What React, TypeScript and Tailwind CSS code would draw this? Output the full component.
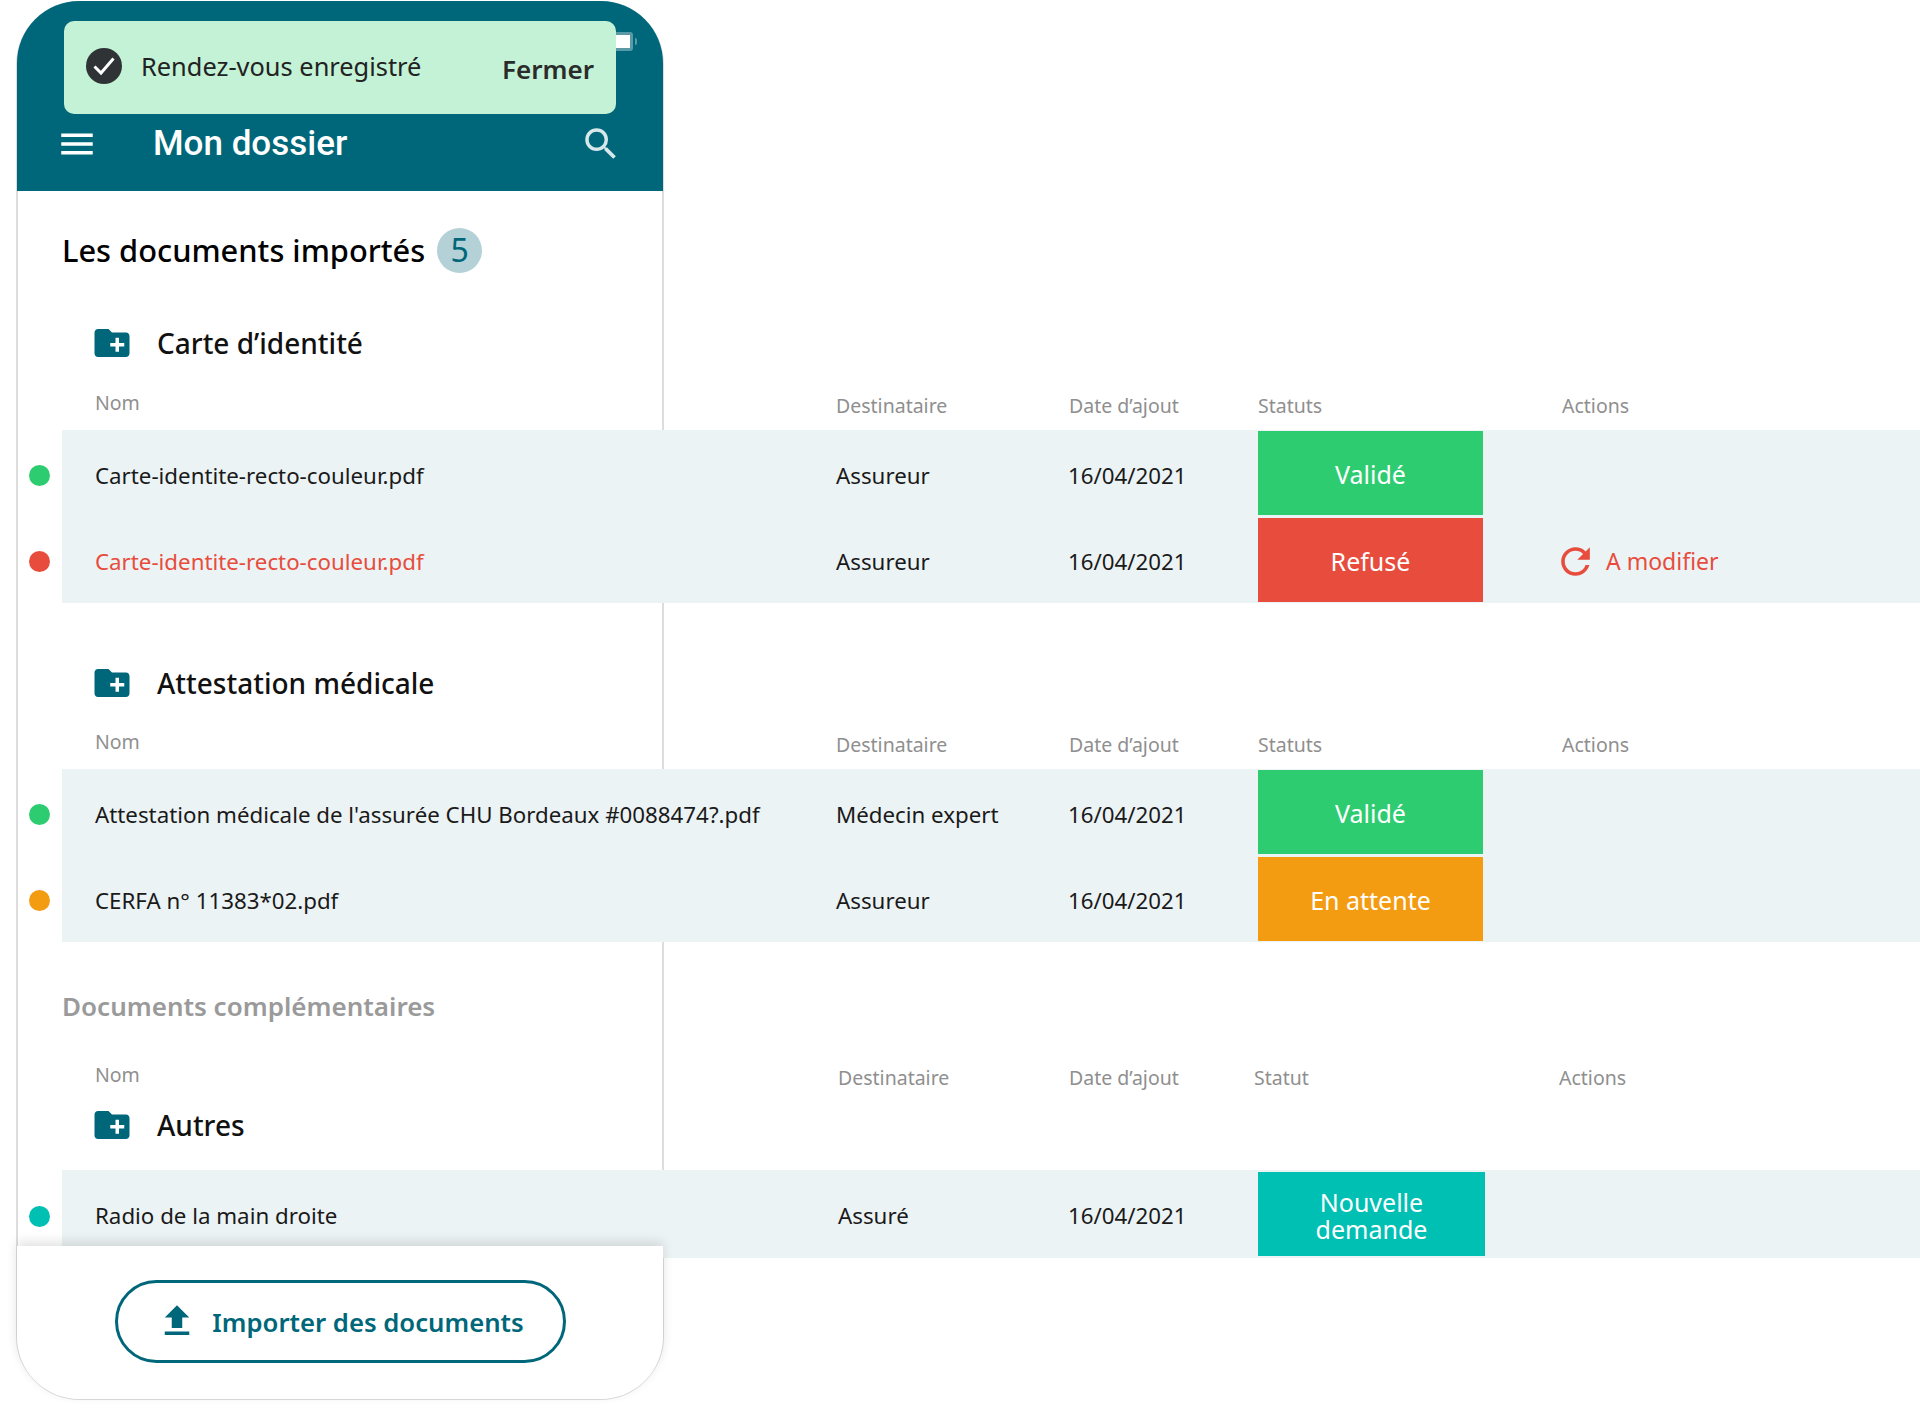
import { MdCreateNewFolder, MdFileUpload, MdMenu, MdRefresh, MdSearch } from 'react-icons/md';

type Row = {
  name: string;
  to: string;
  dot: string;
  status: string;
  statusBg: string;
  red?: boolean;
  action?: boolean;
  shifted?: boolean;
};

const identite: Row[] = [
  { name: 'Carte-identite-recto-couleur.pdf', to: 'Assureur', dot: 'bg-[#2ecc71]', status: 'Validé', statusBg: 'bg-[#2ecc71]' },
  { name: 'Carte-identite-recto-couleur.pdf', to: 'Assureur', dot: 'bg-[#e74c3c]', status: 'Refusé', statusBg: 'bg-[#e74c3c]', red: true, action: true }
];

const attestation: Row[] = [
  { name: "Attestation médicale de l'assurée CHU Bordeaux #0088474?.pdf", to: 'Médecin expert', dot: 'bg-[#2ecc71]', status: 'Validé', statusBg: 'bg-[#2ecc71]' },
  { name: 'CERFA n° 11383*02.pdf', to: 'Assureur', dot: 'bg-[#f39c12]', status: 'En attente', statusBg: 'bg-[#f39c12]' }
];

function FolderTitle({ title }: { title: string }) {
  return (
    <div className="flex items-center h-[40px] pl-[91px]">
      <MdCreateNewFolder className="w-[42px] h-[42px] text-[#00677a] shrink-0" />
      <span className="ml-[24px] text-[28px] font-medium text-[#111]">{title}</span>
    </div>
  );
}

function ColumnHeads({ statut = 'Statuts', shifted = false }: { statut?: string; shifted?: boolean }) {
  return (
    <div className="flex h-[30px] text-[19.5px] text-[#8f8f8f]">
      <span className={`pl-[95px] ${shifted ? 'w-[838px]' : 'w-[836px]'}`}>Nom</span>
      <span className={`pt-[3px] ${shifted ? 'w-[231px]' : 'w-[233px]'}`}>Destinataire</span>
      <span className={`pt-[3px] ${shifted ? 'w-[185px]' : 'w-[189px]'}`}>Date d’ajout</span>
      <span className={`pt-[3px] ${shifted ? 'w-[305px]' : 'w-[304px]'}`}>{statut}</span>
      <span className="pt-[3px]">Actions</span>
    </div>
  );
}

function DocRow({ row }: { row: Row }) {
  return (
    <div className={`flex items-center ${row.shifted ? 'h-[88px]' : 'h-[86.5px]'}`}>
      <div className="w-[62px] flex pl-[29px] pt-[4px]">
        <span className={`w-[21px] h-[21px] rounded-full ${row.dot}`} />
      </div>
      <div className="flex-1 h-full flex items-center bg-[#ecf3f5] text-[22.3px] text-[#1a1a1a]">
        <span className={`pl-[33px] pt-[4px] ${row.shifted ? 'w-[776px]' : 'w-[774px]'} ${row.red ? 'text-[#e74c3c]' : ''}`}>{row.name}</span>
        <span className={`pt-[4px] ${row.shifted ? 'w-[230px]' : 'w-[232px]'}`}>{row.to}</span>
        <span className="w-[190px] pt-[4px]">16/04/2021</span>
        <div className={`h-[84px] pt-[3px] flex items-center justify-center text-white text-[25px] ${row.shifted ? 'w-[227px]' : 'w-[225px]'} ${row.statusBg}`}>
          {row.status}
        </div>
        {row.action && (
          <div className="ml-[71px] pt-[3px] flex items-center text-[#e74c3c]">
            <MdRefresh className="w-[43px] h-[43px]" />
            <span className="ml-[9px] text-[23px]">A modifier</span>
          </div>
        )}
      </div>
    </div>
  );
}

export default function App() {
  return (
    <div className="relative w-full h-[1411px] bg-white overflow-hidden font-['Noto_Sans',sans-serif]">
      {/* phone outline sits behind the table bands */}
      <div className="absolute left-[16px] top-[1px] w-[648px] h-[1399px] rounded-[64px] border-2 border-[#dddddd]" />

      <header className="relative ml-[17px] w-[646px] h-[190px] mt-[1px] bg-[#00677a] rounded-t-[62px]">
        <div className="absolute right-[30px] top-[31px] w-[26px] h-[19px] rounded-[3px] border-[3px] border-[#5a9aa6] bg-white" />
        <div className="absolute right-[26px] top-[37px] w-[2px] h-[7px] rounded-r-[2px] bg-[#5a9aa6]" />
        <div className="absolute left-[47px] top-[20px] w-[552px] h-[93px] rounded-[10px] bg-[#c4f2d6] flex items-center pl-[22px] pr-[22px]">
          <svg viewBox="0 0 36 36" className="w-[36px] h-[36px] shrink-0 mb-[4px]">
            <circle cx="18" cy="18" r="18" fill="#2f3336" />
            <path d="M8.5 18.5l6.5 6.5L27.5 10.5" fill="none" stroke="#fff" strokeWidth="3" />
          </svg>
          <span className="ml-[19px] text-[25.4px] text-[#222] mb-[3px]">Rendez-vous enregistré</span>
          <span className="ml-auto mt-[4px] text-[26px] font-semibold text-[#2b2b2b]">Fermer</span>
        </div>
        <div className="absolute left-[39px] right-[41px] top-[117px] flex items-center text-white">
          <MdMenu className="w-[42px] h-[42px]" />
          <span className="ml-[55px] font-['Roboto',sans-serif] font-medium text-[35px]">Mon dossier</span>
          <MdSearch className="ml-auto w-[42px] h-[42px] text-[#d7e8eb]" />
        </div>
      </header>

      <main className="relative">
        <div className="flex items-center h-[46px] mt-[36px] pl-[62px]">
          <h1 className="text-[30.8px] font-medium text-black">Les documents importés</h1>
          <span className="ml-[12px] w-[45px] h-[45px] rounded-full bg-[#b3d1d7] text-[#00677a] text-[32px] flex items-center justify-center">5</span>
        </div>

        <section className="mt-[50px]">
          <FolderTitle title="Carte d’identité" />
          <div className="mt-[25px]"><ColumnHeads /></div>
          <div className="mt-[12px]">
            {identite.map((row, i) => <DocRow key={i} row={row} />)}
          </div>
        </section>

        <section className="mt-[60px]">
          <FolderTitle title="Attestation médicale" />
          <div className="mt-[24px]"><ColumnHeads /></div>
          <div className="mt-[12px]">
            {attestation.map((row, i) => <DocRow key={i} row={row} />)}
          </div>
        </section>

        <section className="mt-[45px]">
          <h2 className="pl-[62px] text-[26px] font-semibold text-[#9a9a9a]">Documents complémentaires</h2>
          <div className="mt-[34px]"><ColumnHeads statut="Statut" shifted /></div>
          <div className="mt-[15px]"><FolderTitle title="Autres" /></div>
          <div className="mt-[25px]">
            <DocRow row={{ name: 'Radio de la main droite', to: 'Assuré', dot: 'bg-[#00bfb3]', status: 'Nouvelle demande', statusBg: 'bg-[#00bfb3] text-center leading-[27px] px-[40px]', shifted: true }} />
          </div>
        </section>
      </main>

      <div className="absolute left-[17px] top-[1246px] w-[646px] h-[153px] bg-white rounded-b-[62px] shadow-[0_-4px_12px_rgba(0,0,0,0.12)] flex items-center justify-center">
        <button className="flex items-center justify-center w-[451px] h-[83px] rounded-full border-[3px] border-[#00677a] text-[#00677a] text-[25.7px] font-semibold mb-[3px]">
          <MdFileUpload className="w-[42px] h-[42px] mr-[14px]" />
          <span className="pt-[4px]">Importer des documents</span>
        </button>
      </div>
    </div>
  );
}
